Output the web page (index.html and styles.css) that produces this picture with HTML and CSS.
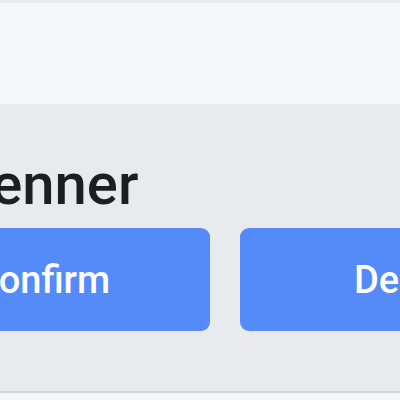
FILE: index.html
```html
<!DOCTYPE html>
<html lang="en">
<head>
  <meta charset="UTF-8" />
  <meta name="viewport" content="width=device-width, initial-scale=1.0" />
  <title>Friend request</title>
  <link rel="stylesheet" href="styles.css">
</head>
<body>
  <div class="top-panel"></div>
  <section class="request">
    <div class="request-body">
      <h2 class="name">Kylie Jenner</h2>
      <div class="actions">
        <button class="btn">Confirm</button>
        <button class="btn">Delete</button>
      </div>
    </div>
  </section>
  <div class="bottom-panel"></div>
</body>
</html>
```

FILE: styles.css
```css
* {
  box-sizing: border-box;
}
body {
  margin: 0;
  font-family: Roboto, "Liberation Sans", sans-serif;
  background-color: #e9eaed;
  color: #1c1e21;
  overflow: hidden;
}
.top-panel {
  height: 104px;
  background-color: #f5f6f8;
  border-top: 3px solid #e9eaed;
}
.request {
  padding: 48px 0 60px;
  overflow: hidden;
}
.request-body {
  margin-left: -126px;
  width: 702px;
}
.name {
  margin: 0 0 12px -54px;
  font-size: 58px;
  line-height: 64px;
  font-weight: 500;
  white-space: nowrap;
}
.actions {
  display: flex;
  gap: 30px;
}
.btn {
  width: 336px;
  height: 103px;
  border: none;
  border-radius: 9px;
  background-color: #558bf9;
  color: #fff;
  font-family: Roboto, "Liberation Sans", sans-serif;
  font-size: 38px;
  font-weight: 500;
  flex-shrink: 0;
}
.bottom-panel {
  height: 20px;
  background-color: #f5f6f8;
  border-top: 2px solid #d4d5d8;
}
```
